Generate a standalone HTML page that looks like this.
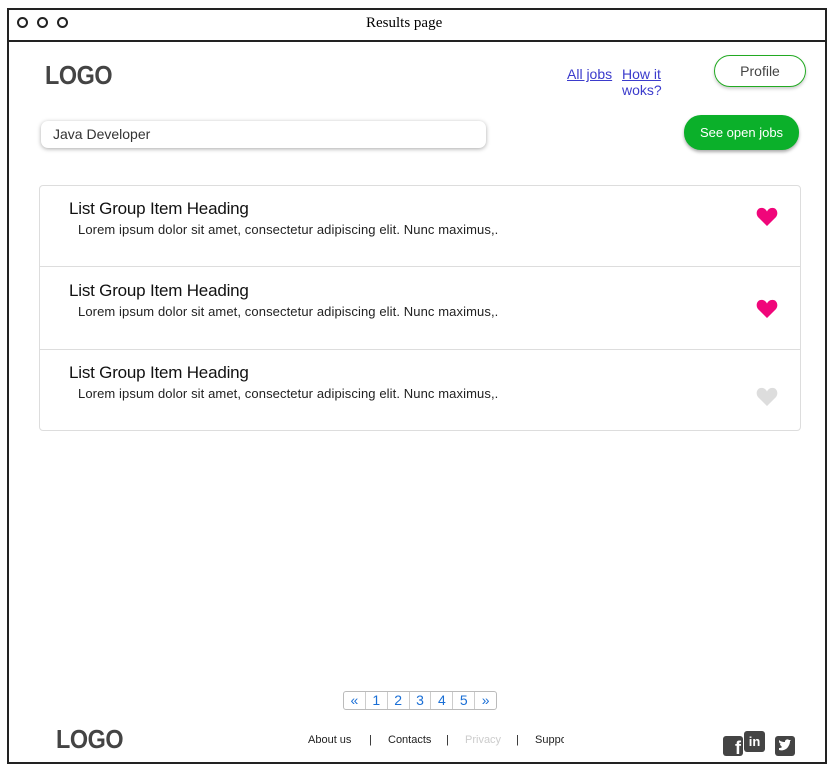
<!DOCTYPE html>
<html><head><meta charset="utf-8"><style>
*{box-sizing:border-box;margin:0;padding:0}
body{width:833px;height:771px;background:#fff;font-family:"Liberation Sans",sans-serif;position:relative;overflow:hidden}
.frame{position:absolute;left:7px;top:8px;width:820px;height:756px;border:2px solid #222;}
.bar{position:absolute;left:7px;top:8px;width:820px;height:34px;border-bottom:2px solid #222}
.dot{position:absolute;top:17px;width:11px;height:11px;border:2px solid #222;border-radius:50%}
.abs{position:absolute}
.item{position:absolute;left:39px;width:762px;border:1px solid #ddd}
.h{position:absolute;left:29px;font-size:17px;color:#111;letter-spacing:-0.2px}
.p{position:absolute;left:38px;font-size:13px;color:#222;letter-spacing:0.1px}
.heart{position:absolute;left:716px}
a{color:#3b3bcc;text-decoration:underline}
.pg{position:absolute;left:343px;top:691px;height:19px;width:154px;border:1px solid #bbb;border-radius:3px;display:flex;font-size:14px;color:#1a6fd6}
.pg span{border-right:1px solid #ccc;flex:1;text-align:center;line-height:17px}
.pg span:last-child{border:none}
.ft{position:absolute;top:734px;font-size:11px;color:#222}
.logo{font-weight:bold;color:#444;letter-spacing:-0.5px;transform:scaleX(0.9);transform-origin:left}
</style></head><body>
<div class="frame"></div>
<div class="bar"></div>
<div class="dot" style="left:17px"></div><div class="dot" style="left:37px"></div><div class="dot" style="left:57px"></div>
<div class="abs" style="left:366px;top:15px;font-size:15px;font-family:'Comic Sans MS',cursive">Results page</div>
<div class="abs logo" style="left:45px;top:60px;font-size:26px">LOGO</div>
<div class="abs" style="left:567px;top:66px;font-size:14px"><a>All jobs</a></div>
<div class="abs" style="left:622px;top:66px;font-size:14px;line-height:16px"><a>How it</a><br><span style="color:#3b3bcc">woks?</span></div>
<div class="abs" style="left:714px;top:55px;width:92px;height:32px;border:1px solid #2a2;border-radius:16px;text-align:center;line-height:30px;font-size:14px;color:#444;box-shadow:0 2px 3px #ccc">Profile</div>
<div class="abs" style="left:41px;top:121px;width:445px;height:27px;border-radius:7px;box-shadow:0 1px 4px #aaa;padding-left:12px;line-height:27px;font-size:14px;color:#333">Java Developer</div>
<div class="abs" style="left:684px;top:115px;width:115px;height:35px;border-radius:17px;background:#0bb02a;color:#fff;text-align:center;line-height:35px;font-size:13px;box-shadow:0 2px 3px #aaa">See open jobs</div>
<div class="item" style="top:185px;height:82px;border-radius:4px 4px 0 0"><div class="h" style="top:13px">List Group Item Heading</div><div class="p" style="top:36px">Lorem ipsum dolor sit amet, consectetur adipiscing elit. Nunc maximus,.</div>
<svg class="heart" style="top:21px" width="22" height="19" viewBox="0 0 24 21"><path d="M12 21L2 11C-1 7 1 1 6 1c3 0 5 2 6 4 1-2 3-4 6-4 5 0 7 6 4 10z" fill="#f0067a"/></svg></div>
<div class="item" style="top:266px;height:84px;border-top:1px solid #ddd"><div class="h" style="top:14px">List Group Item Heading</div><div class="p" style="top:37px">Lorem ipsum dolor sit amet, consectetur adipiscing elit. Nunc maximus,.</div>
<svg class="heart" style="top:32px" width="22" height="19" viewBox="0 0 24 21"><path d="M12 21L2 11C-1 7 1 1 6 1c3 0 5 2 6 4 1-2 3-4 6-4 5 0 7 6 4 10z" fill="#f0067a"/></svg></div>
<div class="item" style="top:349px;height:82px;border-radius:0 0 4px 4px"><div class="h" style="top:13px">List Group Item Heading</div><div class="p" style="top:36px">Lorem ipsum dolor sit amet, consectetur adipiscing elit. Nunc maximus,.</div>
<svg class="heart" style="top:37px" width="22" height="19" viewBox="0 0 24 21"><path d="M12 21L2 11C-1 7 1 1 6 1c3 0 5 2 6 4 1-2 3-4 6-4 5 0 7 6 4 10z" fill="#ddd"/></svg></div>
<div class="pg"><span>«</span><span>1</span><span>2</span><span>3</span><span>4</span><span>5</span><span>»</span></div>
<div class="abs logo" style="left:56px;top:724px;font-size:26px">LOGO</div>
<div class="ft" style="left:308px">About us</div><div class="ft" style="left:369px">|</div>
<div class="ft" style="left:388px">Contacts</div><div class="ft" style="left:446px">|</div>
<div class="ft" style="left:465px;color:#ccc">Privacy</div><div class="ft" style="left:516px">|</div>
<div class="ft" style="left:535px;width:29px;overflow:hidden;white-space:nowrap">Support</div>
<div class="abs" style="left:723px;top:736px;width:20px;height:20px;background:#444;border-radius:3px;color:#fff;font-weight:bold;font-size:18px;text-align:right;padding-right:2px;line-height:24px;overflow:hidden">f</div>
<div class="abs" style="left:744px;top:731px;width:21px;height:21px;background:#444;border-radius:3px;color:#fff;font-weight:bold;font-size:13px;text-align:center;line-height:21px">in</div>
<div class="abs" style="left:775px;top:736px;width:20px;height:20px;background:#444;border-radius:3px"><svg width="20" height="20" viewBox="0 0 20 20"><path d="M4 14c3 1 7 0 9-3s2-5 2-6l1-1-2 0c-1-1-3-1-4 1v1C7 6 5 5 4 4c0 2 0 3 2 4H5c0 1 1 2 2 3-1 1-2 1-3 1z" fill="#fff"/></svg></div>
</body></html>
